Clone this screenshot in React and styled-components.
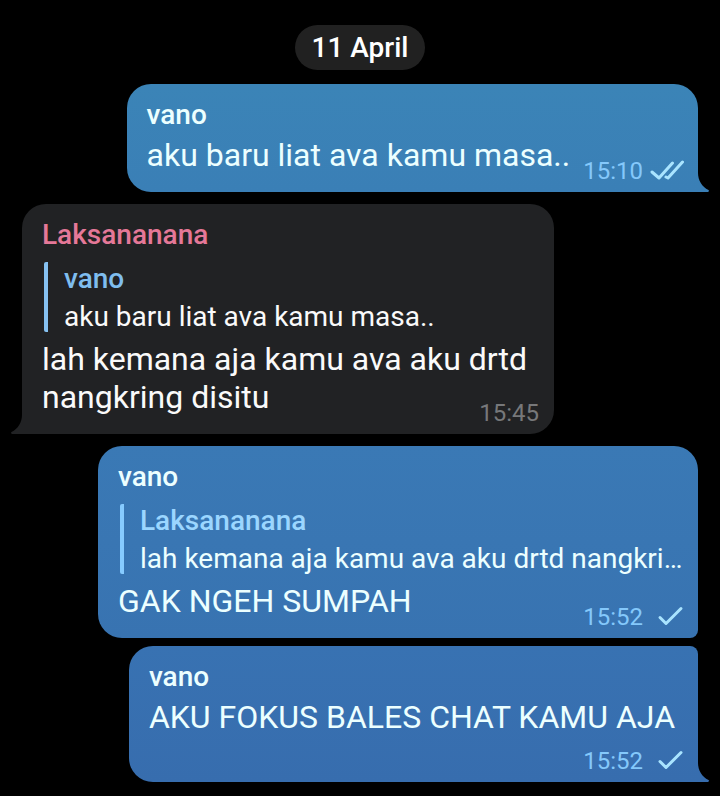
import React from "react";
import styled, { createGlobalStyle, css } from "styled-components";

const GlobalStyle = createGlobalStyle`
  * { box-sizing: border-box; }
  body {
    margin: 0;
    background: #000;
    font-family: Roboto, "Noto Sans", sans-serif;
  }
`;

const Chat = styled.main`
  display: flex;
  flex-direction: column;
  min-height: 100vh;
  padding: 25px 22px 14px;
  background: #000;
`;

const DatePill = styled.time`
  align-self: center;
  margin-bottom: 14px;
  padding: 7px 16px 6px;
  border-radius: 23px;
  background: #212121;
  color: #fff;
  font-size: 28px;
  font-weight: 500;
  line-height: 32px;
`;

const outgoing = css`
  align-self: flex-end;
  max-width: 600px;
  background: linear-gradient(${(p) => p.$from}, ${(p) => p.$to});
  color: #ecffff;
  --tail: ${(p) => p.$to};
  --meta: #84c8fb;
  --accent: #86cbff;
  --quote: #9bd6ff;
`;

const incoming = css`
  align-self: flex-start;
  max-width: 532px;
  background: #212224;
  color: #fafafa;
  --tail: #212224;
  --meta: #77787a;
  --accent: #86c1f1;
  --quote: #7fbdee;
`;

const Bubble = styled.article`
  position: relative;
  display: flex;
  flex-direction: column;
  margin-bottom: ${(p) => (p.$grouped ? 8 : 12)}px;
  padding: 14px 20px 7px;
  border-radius: ${(p) => p.$radius};
  ${(p) => (p.$out ? outgoing : incoming)}
`;

const Sender = styled.h2`
  margin: 0;
  color: ${(p) => p.$color || "inherit"};
  font-size: 28px;
  font-weight: 500;
  line-height: 34px;
`;

const Quote = styled.blockquote`
  display: flex;
  flex-direction: column;
  gap: 5px;
  min-width: 0;
  margin: 10px -8px 4px 2px;
  padding-left: 16px;
  border-left: 4px solid var(--accent);
  border-radius: 2px;
`;

const QuoteName = styled.cite`
  color: var(--quote);
  font-size: 28px;
  font-style: normal;
  font-weight: 500;
  line-height: 34px;
`;

const QuoteText = styled.p`
  overflow: hidden;
  margin: 0;
  font-size: 28px;
  line-height: 31px;
  text-overflow: ellipsis;
  white-space: nowrap;
`;

const contentLayouts = {
  inline: css`
    display: flex;
    align-items: flex-end;
    justify-content: space-between;
    column-gap: 13px;
  `,
  below: css`
    display: flex;
    flex-direction: column;
    align-items: flex-end;
    row-gap: 11px;
  `,
  tucked: css`
    display: flow-root;
  `,
};

const Content = styled.div`
  margin-top: 4px;
  font-size: 32px;
  line-height: 38px;
  ${(p) => contentLayouts[p.$placement]}
`;

const bodySpacing = {
  inline: css`padding-bottom: 11px;`,
  below: css`padding-right: 3px;`,
};

const Body = styled.span`
  ${(p) => bodySpacing[p.$placement]}
`;

const Meta = styled.footer`
  display: flex;
  align-items: center;
  gap: 7px;
  margin-right: ${(p) => (p.$out ? -6 : -5)}px;
  color: var(--meta);
  font-size: 24px;
  line-height: 28px;
  ${(p) =>
    p.$placement === "tucked" &&
    css`
      float: right;
      margin-top: 21px;
    `}
`;

const TickIcon = styled.svg`
  width: 34px;
  height: 24px;
  fill: none;
  stroke: #a9e4ff;
  stroke-width: 3;
  stroke-linecap: round;
  stroke-linejoin: round;
`;

const TailShape = styled.svg`
  position: absolute;
  bottom: 0;
  width: 12px;
  height: 24px;
  fill: var(--tail);
  ${(p) =>
    p.$out
      ? css`left: 100%;`
      : css`
          right: 100%;
          transform: scaleX(-1);
        `}
`;

const Tail = ({ out }) => (
  <TailShape $out={out} viewBox="0 0 12 24" aria-hidden="true">
    <path d="M0 0V24H10Q12 23 10.5 22C4 19 0 12 0 5Z" />
  </TailShape>
);

const Ticks = ({ read }) => (
  <TickIcon viewBox="0 0 34 24" role="img" aria-label={read ? "Read" : "Sent"}>
    {read ? (
      <>
        <path d="M2 13L9 19L22.500 4" />
        <path d="M16 18L18 19L32.500 3" />
      </>
    ) : (
      <path d="M10 12.500L16 18.500L31 3.500" />
    )}
  </TickIcon>
);

const messages = [
  {
    out: true, from: "#3b84b7", to: "#3a7fb6", radius: "24px 24px 0 24px", tail: true,
    sender: "vano", text: "aku baru liat ava kamu masa..", time: "15:10", read: true,
    placement: "inline",
  },
  {
    radius: "24px 24px 24px 0", tail: true,
    sender: "Laksananana", senderColor: "#e57898",
    quote: { name: "vano", text: "aku baru liat ava kamu masa.." },
    text: "lah kemana aja kamu ava aku drtd nangkring disitu", time: "15:45",
    placement: "tucked",
  },
  {
    out: true, from: "#3a79b5", to: "#3873b1", radius: "24px 24px 8px 24px", grouped: true,
    sender: "vano",
    quote: { name: "Laksananana", text: "lah kemana aja kamu ava aku drtd nangkring disitu" },
    text: "GAK NGEH SUMPAH", time: "15:52", placement: "inline",
  },
  {
    out: true, from: "#3872b2", to: "#376dae", radius: "24px 8px 0 24px", tail: true,
    sender: "vano", text: "AKU FOKUS BALES CHAT KAMU AJA", time: "15:52",
    placement: "below",
  },
];

const Message = ({ message: m }) => (
  <Bubble $out={m.out} $from={m.from} $to={m.to} $radius={m.radius} $grouped={m.grouped}>
    <Sender $color={m.senderColor}>{m.sender}</Sender>
    {m.quote && (
      <Quote>
        <QuoteName>{m.quote.name}</QuoteName>
        <QuoteText>{m.quote.text}</QuoteText>
      </Quote>
    )}
    <Content $placement={m.placement}>
      <Body $placement={m.placement}>{m.text}</Body>
      <Meta $placement={m.placement} $out={m.out}>
        <time>{m.time}</time>
        {m.out && <Ticks read={m.read} />}
      </Meta>
    </Content>
    {m.tail && <Tail out={m.out} />}
  </Bubble>
);

export default function App() {
  return (
    <>
      <GlobalStyle />
      <Chat>
        <DatePill>11 April</DatePill>
        {messages.map((message, i) => (
          <Message key={i} message={message} />
        ))}
      </Chat>
    </>
  );
}
